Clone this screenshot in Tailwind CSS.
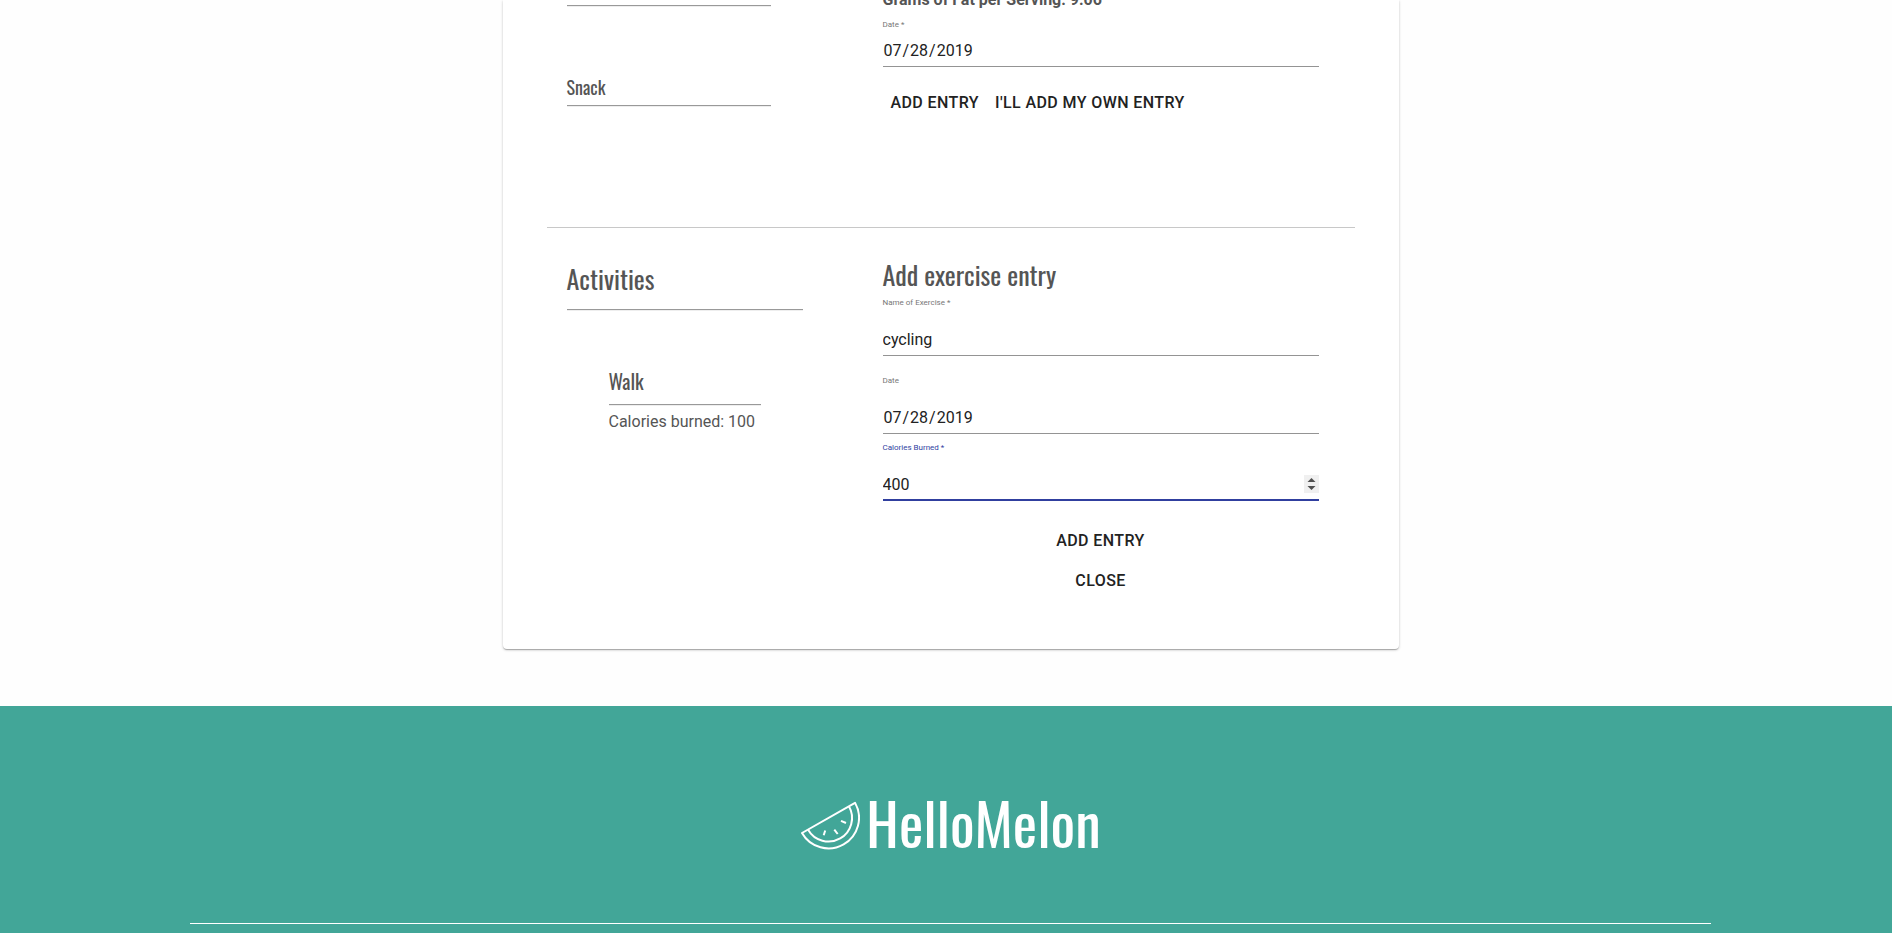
<!DOCTYPE html>
<html lang="en">
<head>
<meta charset="utf-8">
<title>HelloMelon</title>
<script src="https://cdn.jsdelivr.net/npm/@tailwindcss/browser@4"></script>
</head>
<body class="overflow-hidden bg-[#fefefe] font-['Roboto',sans-serif] text-base text-[#555]">
<div class="w-[calc(100%+9px)]">
  <main class="mx-auto w-full max-w-4xl rounded-b-[4px] bg-white px-11 shadow-[0_1px_3px_rgba(0,0,0,0.2),0_1px_1px_rgba(0,0,0,0.14),0_2px_1px_-1px_rgba(0,0,0,0.12)]">
    <section class="flex h-[228px] border-b border-[#c8c8c8]">
      <div class="w-[336px] pl-5 pt-[5px]">
        <hr class="w-[204px] border-t border-b border-t-[#999] border-b-[#eee]">
        <h3 class="mt-[66px] font-['Oswald','Liberation_Sans_Narrow',sans-serif] text-[18px] leading-7">Snack</h3>
        <hr class="mt-1 w-[204px] border-t border-b border-t-[#999] border-b-[#eee]">
      </div>
      <form class="w-[436px]">
        <p class="-mt-3 h-6 font-bold leading-6">Grams of Fat per Serving: 9.06</p>
        <div class="mt-2 flex flex-col gap-1">
          <label for="food-date" class="text-[8px] leading-[10px] text-[#777]">Date *</label>
          <input id="food-date" type="date" value="2019-07-28" class="h-[33px] w-full border-b border-[#949494] pt-0.5 text-[#222] outline-none [&::-webkit-calendar-picker-indicator]:hidden">
        </div>
        <div class="mt-4 flex font-medium tracking-wide text-[#222]">
          <button type="button" class="h-10 px-2">ADD ENTRY</button>
          <button type="button" class="h-10 px-2">I'LL ADD MY OWN ENTRY</button>
        </div>
      </form>
    </section>
    <section class="flex pb-12">
      <div class="w-[336px] pl-5 pt-[35px]">
        <h2 class="font-['Oswald','Liberation_Sans_Narrow',sans-serif] text-[26px] leading-8">Activities</h2>
        <hr class="mt-3.5 w-[236px] border-t border-b border-t-[#999] border-b-[#eee]">
        <div class="ml-[42px] mt-14 w-[152px]">
          <h3 class="font-['Oswald','Liberation_Sans_Narrow',sans-serif] text-[20px] leading-7">Walk</h3>
          <hr class="mt-[9px] border-t border-b border-t-[#999] border-b-[#eee]">
          <p class="mt-1 leading-6">Calories burned: 100</p>
        </div>
      </div>
      <form class="w-[436px] pt-[31px]">
        <h2 class="font-['Oswald','Liberation_Sans_Narrow',sans-serif] text-[26px] leading-8">Add exercise entry</h2>
        <div class="mt-[7px] flex flex-col gap-[15px]">
          <label for="name" class="text-[8px] leading-[10px] text-[#777]">Name of Exercise *</label>
          <input id="name" type="text" value="cycling" class="h-[33px] w-full border-b border-[#949494] text-[#222] outline-none">
        </div>
        <div class="mt-5 flex flex-col gap-[15px]">
          <label for="date" class="text-[8px] leading-[10px] text-[#777]">Date</label>
          <input id="date" type="date" value="2019-07-28" class="h-[33px] w-full border-b border-[#949494] pt-0.5 text-[#222] outline-none [&::-webkit-calendar-picker-indicator]:hidden">
        </div>
        <div class="mt-[9px] flex flex-col gap-[15px]">
          <label for="calories" class="text-[8px] leading-[10px] text-[#303f9f]">Calories Burned *</label>
          <div class="relative">
            <input id="calories" type="number" value="400" class="block h-[33px] w-full border-b-2 border-[#303f9f] pt-0.5 text-[#222] outline-none [&::-webkit-inner-spin-button]:opacity-0">
            <svg class="pointer-events-none absolute right-0 top-[7px] h-[18px] w-[15px] bg-[#f0f0f0]" viewBox="0 0 15 18" fill="#505050" aria-hidden="true">
              <path d="M3.500 7 L7.500 3 L11.500 7Z M3.500 11 L7.500 15 L11.500 11Z"/>
            </svg>
          </div>
        </div>
        <div class="mt-5 flex flex-col items-center font-medium tracking-wide text-[#222]">
          <button type="button" class="h-10 px-2">ADD ENTRY</button>
          <button type="button" class="h-10 px-2">CLOSE</button>
        </div>
      </form>
    </section>
  </main>
  <footer class="mt-[57px] bg-[#42a698] px-[10%] pb-[9px] pt-[94px] text-white">
    <div class="flex h-[50px] items-center justify-center gap-1.5">
      <svg class="h-[50px] w-[60px]" viewBox="0 0 60 50" fill="none" stroke="currentColor" stroke-width="2" stroke-linejoin="round" aria-hidden="true">
        <path d="M2 33 L55 2.800 A30.500 30.500 0 0 1 2 33Z"/>
        <path d="M8.100 29.700 A23.500 23.500 0 0 0 48.900 6.300"/>
        <path d="M25.200 30.500 L23.700 35.300 M34.300 29.700 L37.700 34 M41 20.800 L46 23"/>
      </svg>
      <span class="pb-1.5 font-['Oswald','Liberation_Sans_Narrow',sans-serif] text-[58px] leading-none">HelloMelon</span>
    </div>
    <hr class="mt-[73px] border-white">
  </footer>
</div>
</body>
</html>
